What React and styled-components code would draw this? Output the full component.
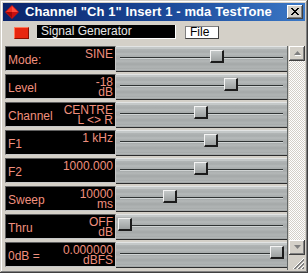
import React from "react";
import styled, { createGlobalStyle } from "styled-components";

const Global = createGlobalStyle`
  html, body { margin: 0; padding: 0; background: #d4d0c8; overflow: hidden; }
  * { box-sizing: border-box; }
`;

const Window = styled.div`
  width: 308px;
  height: 273px;
  background: #d4d0c8;
  padding: 3px;
  display: flex;
  flex-direction: column;
  box-shadow: inset -1px -1px #404040, inset 1px 1px #d4d0c8,
    inset -2px -2px #808080, inset 2px 2px #ffffff;
  font-family: "Liberation Sans", Arial, sans-serif;
`;

const TitleBar = styled.div`
  height: 18px;
  display: flex;
  align-items: center;
  padding-left: 2px;
  padding-right: 2px;
  background: linear-gradient(to right, #0a246a 0%, #1c4a9a 55%, #3b78c6 100%);
`;

const TitleText = styled.div`
  color: #fff;
  font-weight: bold;
  font-size: 13px;
  margin-left: 6px;
  flex: 1;
  white-space: nowrap;
  letter-spacing: 0.1px;
`;

const CloseBtn = styled.div`
  width: 16px;
  height: 14px;
  background: #d4d0c8;
  display: flex;
  align-items: center;
  justify-content: center;
  box-shadow: inset -1px -1px #404040, inset 1px 1px #ffffff,
    inset -2px -2px #808080;
`;

const Toolbar = styled.div`
  height: 24px;
  display: flex;
  align-items: center;
  padding-left: 11px;
`;

const RedButton = styled.div`
  width: 15px;
  height: 12px;
  background: #e8260e;
  border: 1px solid;
  border-color: #ff7a5a #8a1000 #8a1000 #ff7a5a;
  margin-top: 2px;
`;

const NameField = styled.div`
  width: 139px;
  height: 14px;
  margin-left: 8px;
  background: #000;
  color: #e8e8e8;
  font-size: 12px;
  line-height: 13px;
  padding-left: 4px;
  border-bottom: 1px solid #ffffff;
  border-right: 1px solid #ffffff;
`;

const FileBox = styled.div`
  width: 34px;
  height: 13px;
  margin-left: 9px;
  margin-top: 1px;
  background: #fff;
  border: 1px solid;
  border-color: #808080 #404040 #404040 #808080;
  color: #000;
  font-size: 12px;
  line-height: 11px;
  padding-left: 4px;
`;

const Content = styled.div`
  flex: 1;
  display: flex;
  padding-top: 2px;
`;

const Rows = styled.div`
  flex: 1;
  display: flex;
  flex-direction: column;
  padding-left: 2px;
`;

const Row = styled.div`
  height: 28px;
  display: flex;
`;

const LabelBox = styled.div`
  width: 111px;
  height: 25px;
  background: #000;
  border: 1px solid;
  border-color: #606060 #c8c8c8 #c8c8c8 #606060;
  display: flex;
  justify-content: space-between;
  color: #f0907e;
  font-size: 12px;
  padding: 0 2px 0 2px;
`;

const Label = styled.div`
  padding-top: 7px;
  line-height: 13px;
`;

const Value = styled.div`
  text-align: right;
  line-height: 10px;
  padding-top: 2px;
  white-space: pre;
`;

const Slider = styled.div`
  position: relative;
  width: 172px;
  height: 28px;
  background: linear-gradient(
    to bottom,
    #e2e4e4 0px,
    #e2e4e4 1px,
    #c4c8c8 1px,
    #c4c8c8 3px,
    #b2b6b6 3px,
    #a8acac 6px,
    #b6baba 8px,
    #aaaeae 10px,
    #a6aaaa 13px,
    #b4b8b8 15px,
    #a4a8a8 18px,
    #b0b4b4 21px,
    #a6aaaa 23px,
    #bcc0c0 24px,
    #8c9090 25px,
    #2c2c2c 25px,
    #2c2c2c 26px,
    #d4d0c8 26px,
    #d4d0c8 28px
  );
  box-shadow: inset -1px 0 #606464;
  &::before {
    content: "";
    position: absolute;
    left: 4px;
    right: 5px;
    top: 11px;
    height: 1px;
    background: #303434;
    box-shadow: 0 1px #d0d4d4;
  }
`;

const Thumb = styled.div`
  position: absolute;
  top: 4px;
  width: 14px;
  height: 13px;
  background: linear-gradient(#c4c8c8, #9ca0a0);
  border-top: 1px solid #f4f4f4;
  border-left: 1px solid #f4f4f4;
  border-right: 2px solid #1c1c1c;
  border-bottom: 2px solid #1c1c1c;
`;

const ScrollBar = styled.div`
  width: 16px;
  display: flex;
  flex-direction: column;
  margin-left: 1px;
`;

const ScrollBtn = styled.div`
  width: 16px;
  height: 15px;
  background: #d4d0c8;
  display: flex;
  align-items: center;
  justify-content: center;
  box-shadow: inset -1px -1px #404040, inset 1px 1px #ffffff,
    inset -2px -2px #808080;
`;

const Track = styled.div`
  flex: 1;
  background-color: #d4d0c8;
  background-image: repeating-conic-gradient(#ffffff 0 25%, #d4d0c8 0 50%);
  background-size: 2px 2px;
`;

const Grip = styled.div`
  height: 15px;
  display: flex;
  align-items: flex-end;
  justify-content: flex-end;
`;

const rows = [
  { label: "Mode:", value: "SINE", pos: 0.605 },
  { label: "Level", value: "-18\ndB", pos: 0.7 },
  { label: "Channel", value: "CENTRE\nL <> R", pos: 0.5 },
  { label: "F1", value: "1 kHz", pos: 0.566 },
  { label: "F2", value: "1000.000", pos: 0.5 },
  { label: "Sweep", value: "10000\nms", pos: 0.296 },
  { label: "Thru", value: "OFF\ndB", pos: 0 },
  { label: "0dB =", value: "0.000000\ndBFS", pos: 1 },
];

const Diamond = () => (
  <svg width="14" height="14" viewBox="0 0 14 14">
    <polygon points="7,0 14,7 7,14 0,7" fill="#c81010" />
    <polygon points="7,1 13,7 7,7" fill="#ff4a3a" />
    <polygon points="7,1 1,7 7,7" fill="#f03020" />
    <polygon points="1,7 7,13 7,7" fill="#a00808" />
  </svg>
);

export default function App() {
  return (
    <>
      <Global />
      <Window>
        <TitleBar>
          <Diamond />
          <TitleText>Channel "Ch 1" Insert 1 - mda TestTone</TitleText>
          <CloseBtn>
            <svg width="8" height="7" viewBox="0 0 8 7">
              <path d="M0 0 L7 7 M1 0 L8 7 M7 0 L0 7 M8 0 L1 7" stroke="#000" strokeWidth="1" />
            </svg>
          </CloseBtn>
        </TitleBar>
        <Toolbar>
          <RedButton />
          <NameField>Signal Generator</NameField>
          <FileBox>File</FileBox>
        </Toolbar>
        <Content>
          <Rows>
            {rows.map((r) => (
              <Row key={r.label}>
                <LabelBox>
                  <Label>{r.label}</Label>
                  <Value>{r.value}</Value>
                </LabelBox>
                <Slider>
                  <Thumb style={{ left: 2 + Math.round(r.pos * 152) }} />
                </Slider>
              </Row>
            ))}
          </Rows>
          <ScrollBar>
            <ScrollBtn>
              <svg width="7" height="5" viewBox="0 0 7 5">
                <polygon points="3.5,0 7,4 0,4" fill="#808080" />
                <line x1="1" y1="4.5" x2="7" y2="4.5" stroke="#fff" />
              </svg>
            </ScrollBtn>
            <Track />
            <ScrollBtn>
              <svg width="7" height="5" viewBox="0 0 7 5">
                <polygon points="0,0 7,0 3.5,4" fill="#808080" />
              </svg>
            </ScrollBtn>
            <Grip>
              <svg width="14" height="14" viewBox="0 0 14 14">
                <path d="M13 2 L2 13 M13 6 L6 13 M13 10 L10 13" stroke="#fff" />
                <path d="M13 3 L3 13 M13 4 L4 13 M13 7 L7 13 M13 8 L8 13 M13 11 L11 13 M13 12 L12 13" stroke="#808080" />
              </svg>
            </Grip>
          </ScrollBar>
        </Content>
      </Window>
    </>
  );
}
